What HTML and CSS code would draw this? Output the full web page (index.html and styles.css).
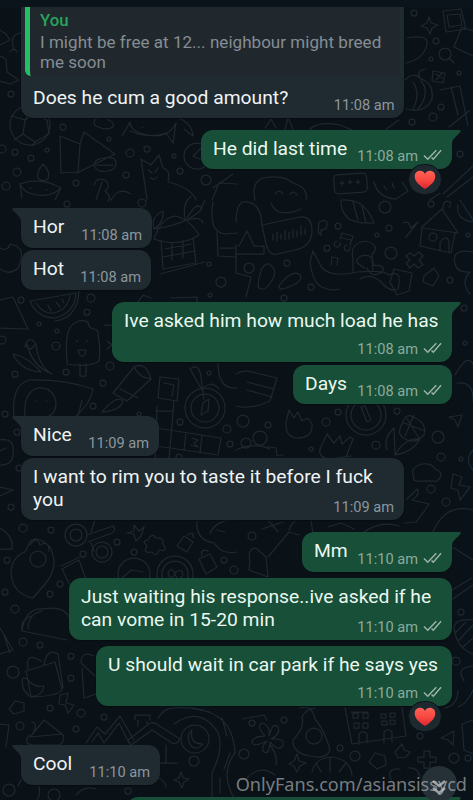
FILE: index.html
```html
<!DOCTYPE html>
<html lang="en">
<head>
<meta charset="utf-8">
<title>Chat</title>
<link rel="stylesheet" href="styles.css">
</head>
<body>
<svg width="0" height="0" class="defs" aria-hidden="true">
  <defs>
    <linearGradient id="red" x1="0" y1="0" x2="0" y2="1"><stop offset="0" stop-color="#ff6258"/><stop offset=".55" stop-color="#f7453f"/><stop offset="1" stop-color="#d92532"/></linearGradient>
    <symbol id="ticks" viewBox="0 0 20 12"><path d="M1 6.5l4 4L14 1M9 8.700l1.800 1.800L19 1" fill="none" stroke="currentColor" stroke-width="1.500"/></symbol>
    <symbol id="heart" viewBox="0 0 22 20"><path d="M11 19C8 17.2 .7 12.600 .7 6.500C.7 3 3 .8 6 .8C8.300 .8 10 2 11 4C12 2 13.700 .8 16 .8C19 .8 21.300 3 21.300 6.500C21.300 12.600 14 17.200 11 19Z" fill="url(#red)"/></symbol>
    <symbol id="tail" viewBox="0 0 12 14"><path d="M0 0H9Q12 0 10 2.500L4 8.500Q2 10.500 2 14H0Z" fill="currentColor"/></symbol>
  </defs>
</svg>
<div class="screen">
  <svg class="wallpaper" viewBox="0 0 473 800" aria-hidden="true">
    <!-- ball, megaphone, cupcake, cat, cloud, fish -->
    <circle cx="30" cy="125" r="20"/><path d="M12 116l13 4 8-15M25 120l-2 14 12 8 14-8-2-14-14-5-8 5M23 134l-9 6M35 142l-3 4"/>
    <path d="M60 136l20 8-2 28-17 1zM80 144l4-12 31 22-38 19M94 164q2-6 10-6 12-2 12 5t-8 8q-13 2-14-7zM97 165h16"/>
    <path d="M38 178q-2-6 5-14 8 8 5 15-5 4-10-1zM20 184q20-8 41 4-9 9-24 7-14-2-17-11zM20 184l2 14M61 188l-6 12M30 188h1M46 190h1"/>
    <path d="M147 200l-2-14-4-27 10 6 8-10 4 13q8 2 5 14 24 6 28 18M148 170l4 3M158 168l-3 4M151 178q3 3 6-1"/>
    <path d="M96 126q-5-5 2-8 8-4 10 2 7 2 5 7-7 4-17-1zM122 136q6-10 8-14 0 10 18 13 20 4 28-12l-3 20-7-10q-18 6-36-2M178 118q14 5 15 18l-9-7M142 127h1"/>
    <path d="M94 185q3-9 12-4 5 6-1 10 7 6 3 10M96 200l6-18M111 200q8-14 20-6M0 45l10-5-4-6-6-4M0 56l6 3 1 13 12 8-9 4-10-3M14 50q-5-16 7-17M10 52q4-6 7 0"/>
    <circle cx="197" cy="156" r="13"/><path d="M204 145l-11 11 9 4M212 200l7-17 18 1M213 188l20-14"/>
    <path d="M255 200q-4-18 8-22 20-4 30 5 16 5 13 17M275 194q4-6 8 0M290 194q4-4 7 1"/><rect x="334" y="174" width="33" height="19" rx="4" transform="rotate(-4 350 183)"/><path d="M340 183h4M348 182h4M356 182h4M342 181v4M350 180v4M358 180v4"/>
    <path d="M374 182q4 16 22 17l12-8-6-9M384 186l3 4M392 183l2 5M440 193l-10 7"/>
    <!-- right edge upper -->
    <path d="M443 11l18-2 5 20-20 3zM447 15l13-1 2 11-13 2zM462 27l14 5M462 27l-8 20 19 9M429 17l2 6 7 2-6 3-2 6-3-6-6-2 6-3zM433 71l12 2-2 10-11-2zM436 74l6 4M442 73l-6 7"/>
    <circle cx="445" cy="54" r="6"/><path d="M449 58l5 5M407 38q22-4 20 6-3 15-21 19M405 80q9-9 16-1 13 4 11 20-6 15-26 10M420 78q-4-7 5-9M413 82q8 12 0 27M421 81q10 12-3 28M440 90l20-4 8 40M451 87l7 28M449 127l20-16M443 194l30-28M447 197l26-20"/>
    <path d="M310 129q8-8 30-4l12 5M265 128l6-9 5 9M285 129l3-11 5 11M386 129l13-9"/>
    <!-- hut, bird and melon -->
    <path d="M154 239q7-20 20-23 15 2 25 19-20 13-45 4zM161 240l2 29 33-6-3-25M165 249l26-5M163 257l32-6M172 243v17M183 240v18M160 274l45-12M150 240q-5-8-12 0M185 219q-3-15 6-23M187 218q10-18 15-9M188 220q13-4 15 3"/>
    <path d="M154 229q10-6 9-18-13 6-9 18 30-4 46-18l5-11M213 202q-5 30 12 32l12-1M217 232l1 24 18 1M220 248h15"/>
    <path d="M30 301l46-8q-1 20-21 25-18 0-25-17zM36 303q7 11 18 10 14-3 16-18M48 305l3 6M56 302l4 5M62 299l2 4M79 290q-1 28-24 31"/>
    <path d="M0 300l13-3 15 32-28-1M0 269q9 7 18-1 10-21-8-24-2 8-10 4"/>
    <path d="M67 361q-3-34 8-38 6-4 13-1 0 6 6 7 5 0 4 7 3 10 1 25-10 7-32 3zM80 364v12h6v-12M76 341h2M86 341h2M78 350h8q-1 7-4 6-3 0-4-6"/>
    <path d="M13 354q15 3 28 18M27 344q5 22 25 30M25 346q2-8 8-6l3 4-5 5zM13 354q8 17 28 18M36 345q3 22 16 29"/>
    <path d="M104 325h10M107 341l5 4-5 4M137 303l6-8 8 3M171 298l26-1v6"/>
    <!-- voice bubble, shell, house and party dog -->
    <path d="M262 225l38-8q12-1 12 14 0 15-17 19l-18 4q-8 2-11-10zM273 234v6M277 232v9M281 234v5M285 230v10M289 232v7M293 229v9M297 231v6M301 226v9M305 229v5"/>
    <path d="M262 225q-1-25-20-23-6 5-6 20M271 203q6 16 30 6M236 254h28v-8h-10l-7-15-8 15"/>
    <path d="M341 200q-1 11 8 19 9 5 25 4-5-14-15-20-9-4-18-3zM353 202l5 18M362 206l4 17M422 227l20-18 16 24-35-5zM422 228l-2 18 31 7 4-20"/><circle cx="433" cy="237" r="4"/><path d="M440 251v-8q5-9 9-2v11M443 209q0-8 4-8 6 0 2 7"/>
    <path d="M319 222q9-4 8 3 0 5-6 5v5l-3-3zM340 239l2-6 11 3-3 9M342 238l9 2M340 243a3 3 0 11-3-2M350 247a3 3 0 11-3-2M403 223q6-3 8 5l7-6-12 15M410 253l4 3 5-4 4 4-4 4 4 5-5 3-4-4-4 4-4-5 4-3-4-4z"/>
    <path d="M310 262l3-11 9 17q10 10 35 4 28-2 32 3 14-6 9 14-8 4-18-8-11-8-20-2M310 262q2 18 10 24 10 6 20 3M353 271v-12q-4-16 13-18 15 4 6 14l1 15M365 268q-14-7-4-12 13-3 12 9 14 0 9 7-10 7-15-4"/>
    <path d="M258 287q2-24 11-23 10 6 2 18-7 11-13 5zM279 286q12-16 20-12 6 6-8 12-12 6-12 0zM236 245v28l15 4-5 20M390 282l4-13 18 4-3 18-12 4zM424 276l10-8 5 8-6 10-10-4z"/>
    <path d="M332 257l-1 8M332 257l6 1-1 7M458 205q-3 14 15 17M460 200l13 20M473 252q-22-4-18 12 2 9 15 8-10 10 0 22"/>
    <!-- compass, film strip, clock, corn -->
    <path d="M14 417q-3-32 15-37 35-1 64 9-2 14-18 28M25 417q-2-25 13-29 15-1 18 14 0 15-13 15M36 401h1M46 401h1M113 393l21-26q12-6 17 12l-24 22zM120 389l18 9M134 367q5 11 17 12M160 377l19 2-2 22-19-3zM164 383l10 2-2 11M190 369q9-7 11 8l3 22M190 369l12 21q8-11 17-1M218 363q0 27 19 25"/>
    <circle cx="205" cy="408" r="20"/><circle cx="205" cy="408" r="14"/><path d="M201 415l2-12 6-4-1 12z"/>
    <path d="M157 406l-2 60M174 401l-5 58M156 428l65 10-3 17-62-9M186 432l-2 18M202 435l-2 18M192 438l6 2-4 3 4 4-7-2M156 411h16M102 412q14-17 21-11-3 10-21 11M82 400l-4 16"/>
    <path d="M236 374q8-5 20-1l21 5-7 23q-20 9-34 5M247 382l27 7M247 390l25 7M455 375q12-22 18-11M457 383q17-2 16 18"/>
    <circle cx="366" cy="415" r="20"/><circle cx="366" cy="415" r="15"/><path d="M361 407l4-1 6 14-4 2z"/>
    <path d="M286 423l3-13 5 8 4-6 4 9 6-3 4 6q1 14-15 14-12-1-11-15zM320 449l7-15 7 9 6-7 2 8 8-7 3 2-7 18M320 449q-2 8 9 10l22-3M387 450q-4-12 7-22l1 27q18-3 25-16-15-2-25 16M402 424q4-13 13-6 12 5 9 17-10 11-22 2-5-4 0-13zM404 423l21 8M406 417l13 21M414 415l-9 21M449 417l13-2-4 12-3-7zM414 477q-5-9 8-13 10-1 13 5 11 4 2 12h-20q-5-1-3-4z"/>
    <path d="M236 450q18-8 34-1M268 447l8 1 1 8 6-1M0 440q15-3 13 14 0 11-13 11M6 448l-6 3M0 487l13 3-13 6M453 474l9 3-3 8 11 2-10 13-2-10-7-2zM407 499l10-10q4 5-5 11l17 4-4 6-9 12-12 1M473 450q-9 10 0 20"/>
    <circle cx="76" cy="535" r="11"/><circle cx="76" cy="535" r="6"/><circle cx="102" cy="552" r="10"/><circle cx="102" cy="552" r="6"/><path d="M87 535l26-9q4 4-1 7l-24 9M91 543l3 8M95 520l-4 12"/>
    <path d="M134 525l5 6 5-4-3 9-5 5-2-7-7-1 7-2zM148 540q4-8 8-2 8-1 7 6 6 8-4 6-3 8-7 2-10 2-5-6-6-6 1-6zM177 546l7-10 9 6-6 10zM187 535l5-2 2 5M199 559l11-5 7 13-11 7zM202 556q-2-8 6-5"/>
    <path d="M11 574q0-17 14-22l5-10q6-8 20 5 10 20-5 37l-12 14q-20-4-22-24zM30 545q7-10 10 0 9-5 9 6"/><circle cx="38" cy="559" r="8"/><path d="M62 569l17-9 8 22-15 7zM61 566l19-9M0 528q14 8 12 21H0"/>
    <circle cx="134" cy="574" r="16"/><circle cx="175" cy="574" r="18"/><circle cx="175" cy="574" r="13"/><path d="M122 578l9-8 12 2M168 574q2-8 7-1 7-6 8 2-5 8-8-1-5 8-7-1M197 520q-2 20 17 23M210 533q7-14 27-13M214 543q8 12 23 9M217 530l8 2"/>
    <path d="M262 529l21-7M268 520l10 12M250 562q-3-14 6-14l10 9 2 20-19-7zM268 557l21-25 10 3M289 530q6-16 22-10l2 14M328 527l13-4 13 6M363 533q17-13 36-7M433 532q12-29 40-22M438 555l8-7h8l19 12M452 590l20-12M451 600l22-15"/>
    <!-- taco, backpack, farmhouse, road, egg, building -->
    <path d="M22 631q3-23 21-22 22-4 27 10M22 631l45 9M22 631q-2-12 10-15M28 629q0-15 14-18M0 628l13 22-13 4M4 635l6 18M26 671l29-9 7 27q-1 7-31 8zM28 669q-3-18 13-8M44 665q3-18 14-11l5 34M24 690q-5-15 3-11 7 9 17 7-2 12-15 10zM60 695l8-2-2 10 8 2-6 8-3-8-6-1zM9 709l6-8 9 2v8l-10 3zM81 663q0-13 13-7M82 668l2 30 12-4M81 663l14 13"/>
    <path d="M32 722q4 0 3 7l-3 6M30 737l14-17 18 14-32 3zM29 735q-6 8 3 10h28q7-7 1-12M0 724l9 1-3 22M86 743l11-16 8 7 15-18 14 24M92 742l6-9 6 10 15-20 10 20"/><path d="M128 740l22-17q5-1 8 2l22 14q-3 6-8 4l-20-13-21 15zM135 720v-5h15v5M138 720v6M147 721v3M166 745v17M134 763h43"/>
    <circle cx="195" cy="739" r="14"/><path d="M192 730q-3 14 11 14-5 7-12 2-6-10 1-16M158 718q6-10 15-10 60-4 62 45-16 20 0 47M174 724q25-18 43 7 8 15-5 42v27M190 708l20 4M222 718l5 18M230 753l-6 16M220 778v15M181 772l2 6 6 1-5 3-2 6-3-6-5-2 5-2zM18 786q4-12 15-9 11 13 4 23M76 795q9-10 20-6M138 785l12-10q15 3 16 12"/>
    <path d="M300 708q12-4 15 11 10 12 15 31-4 10-20 6-18-3-17-16 12-12 9-23 4-8 13-9"/><circle cx="314" cy="736" r="8"/><path d="M345 708l7 36 54-8-4-29M351 712h17M384 743v-11q5-5 8 0v10M359 744v-10q5-5 8 0v9M353 713h5v5h-5zM363 713h5v5h-5zM354 723h5v5h-5zM363 723h5v5h-5zM381 714h5v4h-5zM390 713h5v4h-5zM382 721h5v4h-5zM390 720h5v4h-5z"/>
    <path d="M265 736q-10-11-2-13 8 4 6 13 4-15 9-9 3 7-7 12 16-1 11 8-5 4-12-5-1 15-7 9-1-6 4-10-14 7-15 1 1-6 13-6zM270 745q8 10 6 20M242 719l22-4 3 5M297 754l2 7 7 2-6 3-3 6-3-6-5-2 5-3zM312 772q3-14 19-15 20 2 21 19M321 772l-5-9M330 772v-14M339 772l7-9M369 762l6-9 10 3 1 9-9 4zM402 744l2 6 6 2-4 5-8 1-3-6zM424 751h6v6h6v5h-6v6h-6v-6h-6v-5h6zM441 738l13-7-1 14-5-5zM247 778q13-14 28-3M391 780q-5-12 9-11M408 768q10-1 12 9"/>
    <path d="M473 620q-17-2-19 7 2 21 19 27M456 632l10-10M459 640l14-15M463 647l10-9M473 666q-18 1-9 15M445 708q13-3 13-18M458 707q9-3 15-17M462 724l11-4M462 724l2 26 9 4"/>
    <g class="dots">
      <circle cx="11" cy="94" r="3"/><circle cx="63" cy="127" r="3"/><circle cx="109" cy="139" r="2"/><circle cx="2" cy="149" r="4"/><circle cx="15" cy="152" r="3"/><circle cx="31" cy="158" r="3"/><circle cx="47" cy="150" r="2"/><circle cx="130" cy="153" r="4"/><circle cx="147" cy="149" r="3"/><circle cx="174" cy="156" r="2"/><circle cx="17" cy="172" r="4"/><circle cx="76" cy="183" r="3"/><circle cx="126" cy="175" r="3"/><circle cx="180" cy="171" r="3"/><circle cx="206" cy="180" r="5"/><circle cx="6" cy="186" r="4"/><circle cx="414" cy="13" r="3"/><circle cx="436" cy="41" r="3"/><circle cx="431" cy="59" r="2"/><circle cx="459" cy="73" r="2"/><circle cx="433" cy="117" r="4"/><circle cx="441" cy="107" r="3"/><circle cx="412" cy="122" r="3"/><circle cx="460" cy="154" r="3"/>
      <circle cx="67" cy="204" r="3"/><circle cx="142" cy="203" r="4"/><circle cx="209" cy="264" r="2"/><circle cx="221" cy="282" r="5"/><circle cx="210" cy="295" r="2"/><circle cx="91" cy="298" r="4"/><circle cx="87" cy="312" r="3"/><circle cx="21" cy="300" r="3"/><circle cx="39" cy="324" r="2"/><circle cx="57" cy="331" r="2"/><circle cx="2" cy="340" r="4"/><circle cx="56" cy="346" r="4"/><circle cx="110" cy="366" r="4"/><circle cx="66" cy="372" r="3"/><circle cx="15" cy="374" r="3"/><circle cx="103" cy="383" r="3"/><circle cx="209" cy="373" r="2"/><circle cx="338" cy="226" r="3"/><circle cx="389" cy="228" r="3"/><circle cx="385" cy="207" r="6"/><circle cx="377" cy="235" r="2"/><circle cx="327" cy="248" r="3"/><circle cx="391" cy="253" r="6"/><circle cx="287" cy="263" r="3"/><circle cx="249" cy="268" r="5"/><circle cx="450" cy="280" r="3"/><circle cx="311" cy="287" r="3"/><circle cx="431" cy="204" r="3"/><circle cx="468" cy="235" r="2"/><circle cx="464" cy="308" r="3"/><circle cx="284" cy="298" r="3"/><circle cx="465" cy="343" r="2"/>
      <circle cx="5" cy="414" r="3"/><circle cx="93" cy="406" r="3"/><circle cx="139" cy="414" r="2"/><circle cx="180" cy="422" r="3"/><circle cx="227" cy="429" r="4"/><circle cx="230" cy="444" r="3"/><circle cx="179" cy="457" r="3"/><circle cx="17" cy="432" r="3"/><circle cx="19" cy="468" r="3"/><circle cx="243" cy="421" r="6"/><circle cx="268" cy="425" r="3"/><circle cx="260" cy="438" r="7"/><circle cx="246" cy="443" r="5"/><circle cx="338" cy="412" r="3"/><circle cx="326" cy="422" r="4"/><circle cx="376" cy="445" r="4"/><circle cx="311" cy="449" r="2"/><circle cx="397" cy="411" r="3"/><circle cx="438" cy="437" r="6"/><circle cx="441" cy="457" r="4"/><circle cx="461" cy="459" r="2"/><circle cx="431" cy="489" r="4"/><circle cx="446" cy="502" r="4"/><circle cx="11" cy="507" r="3"/><circle cx="23" cy="528" r="4"/><circle cx="51" cy="530" r="3"/><circle cx="117" cy="542" r="3"/><circle cx="83" cy="554" r="3"/><circle cx="134" cy="552" r="3"/><circle cx="60" cy="584" r="3"/><circle cx="50" cy="594" r="3"/><circle cx="7" cy="560" r="3"/><circle cx="5" cy="592" r="3"/><circle cx="224" cy="560" r="3"/><circle cx="234" cy="570" r="4"/><circle cx="252" cy="536" r="4"/>
      <circle cx="15" cy="609" r="4"/><circle cx="23" cy="642" r="4"/><circle cx="40" cy="645" r="3"/><circle cx="13" cy="672" r="6"/><circle cx="71" cy="656" r="3"/><circle cx="71" cy="678" r="3"/><circle cx="81" cy="713" r="4"/><circle cx="50" cy="708" r="3"/><circle cx="104" cy="717" r="3"/><circle cx="20" cy="726" r="4"/><circle cx="76" cy="729" r="3"/><circle cx="194" cy="761" r="5"/><circle cx="9" cy="790" r="6"/><circle cx="54" cy="795" r="6"/><circle cx="128" cy="791" r="3"/><circle cx="252" cy="723" r="3"/><circle cx="284" cy="720" r="3"/><circle cx="244" cy="754" r="5"/><circle cx="340" cy="748" r="3"/><circle cx="355" cy="756" r="5"/><circle cx="420" cy="736" r="3"/><circle cx="454" cy="758" r="5"/><circle cx="461" cy="612" r="3"/><circle cx="456" cy="661" r="4"/><circle cx="468" cy="758" r="3"/>
    </g>
  </svg>
  <div class="topbar"></div>
  <main class="chat">
    <div class="row in first"><div class="bubble w383 quoted">
      <div class="quote"><b class="name">You</b><span class="q1">I might be free at 12... neighbour might breed</span><span class="q2">me soon</span></div>
      <div class="line"><span class="text">Does he cum a good amount?</span><span class="meta">11:08 am</span></div>
    </div></div>
    <div class="row out g12"><div class="bubble w251"><span class="text">He did last time</span><span class="meta">11:08 am<svg class="ticks"><use href="#ticks"/></svg></span><svg class="tail"><use href="#tail"/></svg><span class="reaction"><svg><use href="#heart"/></svg></span></div></div>
    <div class="row in g39"><div class="bubble w131"><span class="text">Hor</span><span class="meta">11:08 am</span><svg class="tail"><use href="#tail"/></svg></div></div>
    <div class="row in g3"><div class="bubble w130"><span class="text">Hot</span><span class="meta">11:08 am</span></div></div>
    <div class="row out g12"><div class="bubble w340 tall"><span class="text">Ive asked him how much load he has</span><span class="meta">11:08 am<svg class="ticks"><use href="#ticks"/></svg></span><svg class="tail"><use href="#tail"/></svg></div></div>
    <div class="row out g3"><div class="bubble w159"><span class="text">Days</span><span class="meta">11:08 am<svg class="ticks"><use href="#ticks"/></svg></span></div></div>
    <div class="row in g12"><div class="bubble w138"><span class="text">Nice</span><span class="meta">11:09 am</span><svg class="tail"><use href="#tail"/></svg></div></div>
    <div class="row in g3"><div class="bubble w383 tall two"><span class="text">I want to rim you to taste it before I fuck<br>you</span><span class="meta">11:09 am</span></div></div>
    <div class="row out g12"><div class="bubble w150"><span class="text">Mm</span><span class="meta">11:10 am<svg class="ticks"><use href="#ticks"/></svg></span><svg class="tail"><use href="#tail"/></svg></div></div>
    <div class="row out g7"><div class="bubble w383 tall two"><span class="text">Just waiting his response..ive asked if he<br>can vome in 15-20 min</span><span class="meta">11:10 am<svg class="ticks"><use href="#ticks"/></svg></span></div></div>
    <div class="row out g7"><div class="bubble w356 tall"><span class="text">U should wait in car park if he says yes</span><span class="meta">11:10 am<svg class="ticks"><use href="#ticks"/></svg></span><span class="reaction"><svg><use href="#heart"/></svg></span></div></div>
    <div class="row in g39"><div class="bubble w139"><span class="text">Cool</span><span class="meta">11:10 am</span><svg class="tail"><use href="#tail"/></svg></div></div>
    <div class="row out g12"><div class="bubble w326"><svg class="tail"><use href="#tail"/></svg></div></div>
  </main>
  <div class="scroll"><svg viewBox="0 0 36 36"><path d="M12 15l6 5 6-5M12 22l6 5 6-5"/></svg></div>
  <div class="watermark">OnlyFans.com/asiansissycd</div>
</div>
</body>
</html>
```

FILE: styles.css
```css
* { box-sizing: border-box; }
body { margin: 0; background: #0a1117; font-family: Roboto, "Liberation Sans", sans-serif; }
.defs { position: absolute; }
.screen { position: relative; width: 473px; height: 800px; overflow: hidden; background: #0a1117; }
.wallpaper { position: absolute; left: 0; top: 0; width: 473px; height: 800px; fill: none; stroke: #1f282f; stroke-width: 1.25; stroke-linejoin: round; stroke-linecap: round; }
.topbar { position: relative; height: 7px; background: #0b141b; }
.chat { position: relative; padding: 0 21px; }
.row { display: flex; }
.out { justify-content: flex-end; }
.g3 { margin-top: 2.6px; }
.g7 { margin-top: 6.6px; }
.g12 { margin-top: 12.2px; }
.g39 { margin-top: 39px; }
.bubble { position: relative; display: flex; justify-content: space-between; height: 39.5px; padding: 0 10px 0 12px; border-radius: 12px; background: #1f2b31; color: #f0f3f4; box-shadow: 0 1px 1px #080e12; }
.out .bubble { background: #174f38; color: #ebf8f0; }
.text { padding-top: 7px; font-size: 19.28px; line-height: 23px; white-space: nowrap; }
.meta { align-self: flex-end; display: flex; padding-bottom: 4px; font-size: 14.6px; line-height: 18px; color: #8c979d; white-space: nowrap; }
.out .meta { color: #8cab9b; }
.ticks { width: 19px; height: 12px; margin: 2px 0 0 5px; color: #9db5a9; }
.tall { flex-direction: column; height: 60px; }
.two { height: 61.5px; }
.tall .meta { margin-top: auto; }
.two .meta { margin-top: -23px; }
.tail { position: absolute; top: 0; right: -10px; width: 12px; height: 14px; color: #174f38; }
.in .tail { right: auto; left: -10px; transform: scaleX(-1); color: #1f2b31; }
.in:has(.tail) .bubble { border-top-left-radius: 0; }
.out:has(.tail) .bubble { border-top-right-radius: 0; }
.w130 { width: 130px; }
.w131 { width: 131px; }
.w138 { width: 138px; }
.w139 { width: 139px; }
.w150 { width: 150px; }
.w159 { width: 159px; }
.w251 { width: 251px; }
.w326 { width: 326px; }
.w340 { width: 340px; }
.w356 { width: 356px; }
.w383 { width: 383px; }
.bubble.quoted { flex-direction: column; height: 110.5px; padding: 0; border-radius: 0 0 12px 12px; }
.quote { display: flex; flex-direction: column; height: 69px; margin: 0 4px; padding: 1px 0 0 10px; border-left: 5px solid #27bd66; border-radius: 0 0 0 6px; background: #20282e; font-size: 17px; letter-spacing: .04px; line-height: 20px; color: #858d92; white-space: nowrap; }
.name { line-height: 24px; font-weight: 500; font-size: 16.8px; color: #28a35c; }
.line { display: flex; justify-content: space-between; height: 41.5px; padding: 0 9.5px 0 12px; }
.line .text { padding-top: 9.5px; }
.reaction { position: absolute; right: 10px; top: calc(100% - 5px); display: grid; place-items: center; width: 34px; height: 31px; border-radius: 17px; background: #1d292f; border: 1.5px solid #0b141a; }
.reaction svg { width: 22px; height: 20px; }
.scroll { position: absolute; left: 421px; top: 766px; width: 36px; height: 36px; border-radius: 50%; background: #253037; }
.scroll svg { display: block; fill: none; stroke: #9ba2a6; stroke-width: 2.4; }
.watermark { position: absolute; right: 6px; top: 772px; font: 18.1px/24px "Noto Sans", sans-serif; color: rgba(190, 195, 198, .62); white-space: nowrap; }
```
